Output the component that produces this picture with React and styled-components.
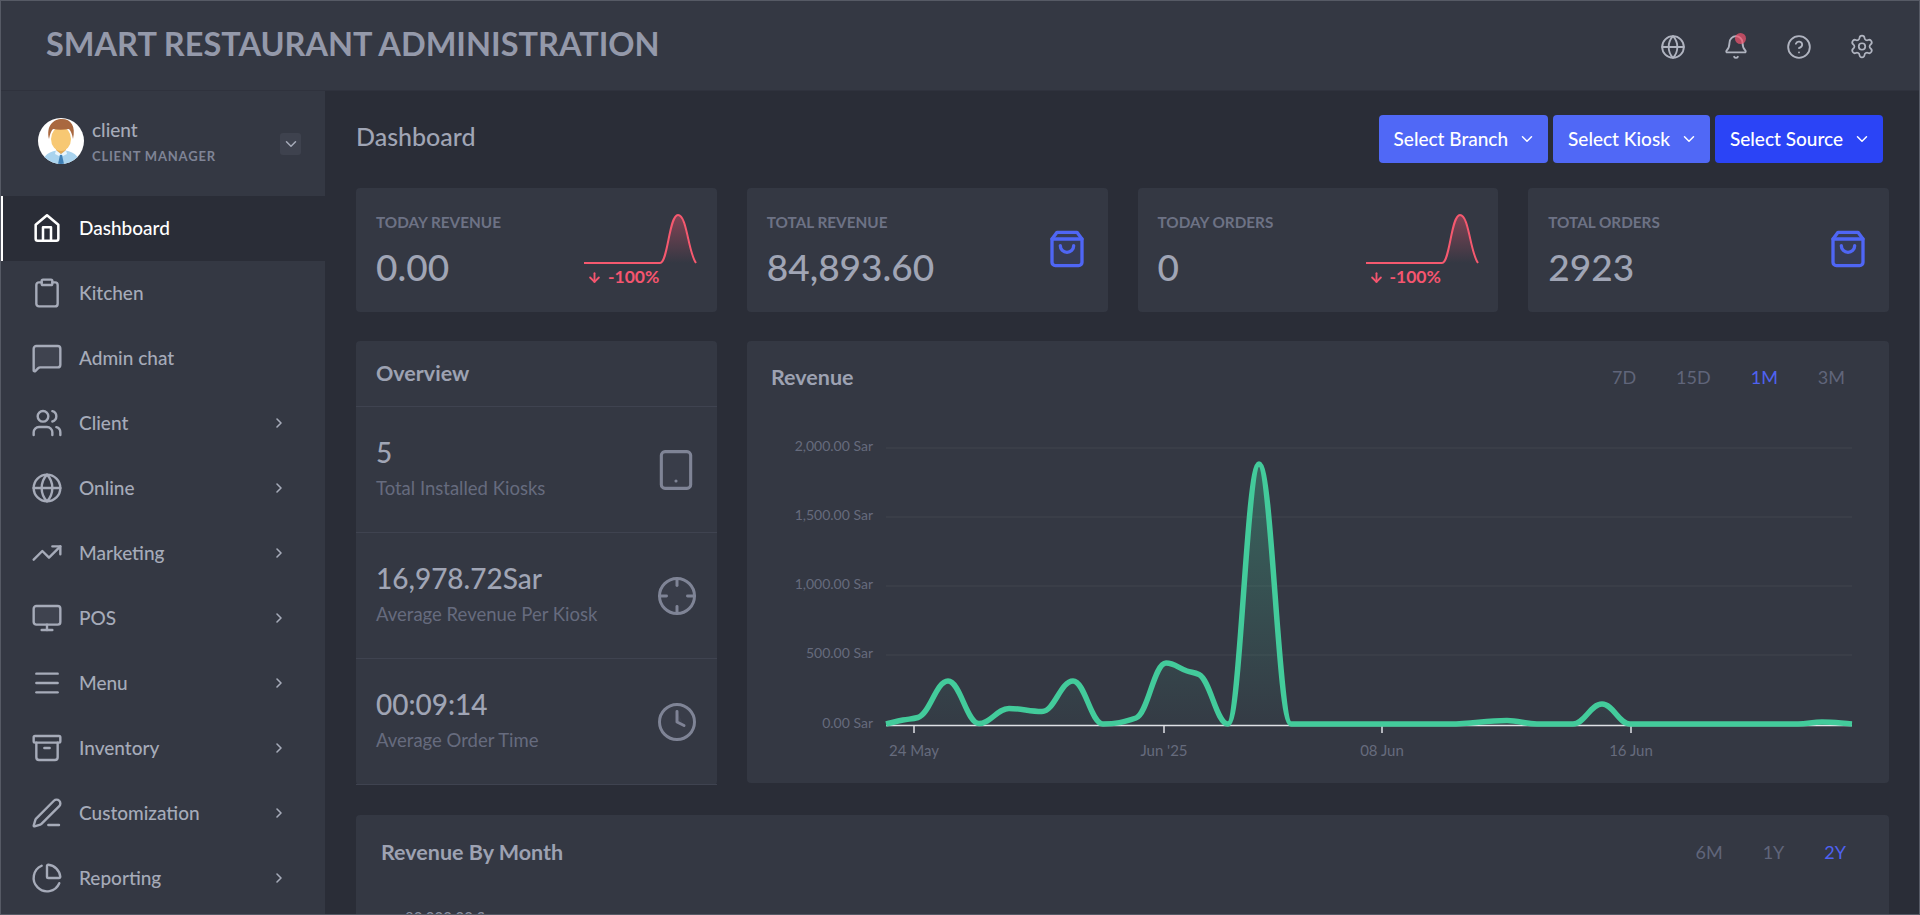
import React from 'react';
import styled, { createGlobalStyle } from 'styled-components';
import {
  Archive,
  ChevronDown,
  ChevronRight,
  Clipboard,
  Globe,
  Bell,
  CircleHelp,
  Clock,
  Crosshair,
  Menu,
  MessageSquare,
  Monitor,
  PenLine,
  ChartPie,
  Settings,
  Tablet,
  TrendingUp,
  Users,
  ArrowDown,
} from 'lucide-react';

const FONT = 'Lato, "Noto Sans", "Liberation Sans", sans-serif';

const GlobalStyle = createGlobalStyle`
  html, body {
    margin: 0;
    height: 100%;
    overflow: hidden;
    background: #2a2d37;
  }
  body {
    font-family: ${FONT};
  }
  * {
    box-sizing: border-box;
  }
`;

const Shell = styled.div`
  height: 915px;
  display: flex;
  flex-direction: column;
  overflow: hidden;
  border: 1px solid #565a65;
  background: #2a2d37;
`;

const TopBar = styled.header`
  flex: 0 0 90px;
  display: flex;
  align-items: center;
  justify-content: space-between;
  padding: 0 44px 0 45px;
  background: #343843;
  border-bottom: 1px solid #2f323d;
`;

const Brand = styled.h1`
  margin: 0 0 4px;
  font-size: 32.5px;
  font-weight: 700;
  color: #9499aa;
`;

const TopIcons = styled.div`
  display: flex;
  align-items: center;
  gap: 37px;
  margin-top: 2px;
  color: #b0b4c0;
`;

const TopIcon = styled.span`
  position: relative;
  display: flex;
  width: 26px;
  height: 26px;
  align-items: center;
  justify-content: center;
`;

const BellDot = styled.i`
  position: absolute;
  top: -1px;
  right: 3px;
  width: 11px;
  height: 11px;
  border-radius: 50%;
  background: rgba(245, 85, 111, 0.7);
`;

const Body = styled.div`
  flex: 1;
  display: flex;
  min-height: 0;
`;

const Sidebar = styled.aside`
  flex: 0 0 324px;
  background: #343843;
`;

const UserPanel = styled.div`
  height: 105px;
  display: flex;
  align-items: center;
  padding: 0 24px 6px 37px;
  gap: 8px;
`;

const UserText = styled.div`
  flex: 1;
  display: flex;
  flex-direction: column;
  gap: 7px;
`;

const UserName = styled.span`
  font-size: 19px;
  font-weight: 500;
  color: #a6abb9;
`;

const UserRole = styled.span`
  font-size: 13px;
  font-weight: 700;
  letter-spacing: 0.8px;
  color: #7f8496;
`;

const UserToggle = styled.span`
  display: flex;
  width: 21px;
  height: 22px;
  margin-top: 6px;
  align-items: center;
  justify-content: center;
  border-radius: 3px;
  background: #3e424e;
  color: #a6abb9;
`;

const NavItem = styled.div`
  position: relative;
  height: 65px;
  display: flex;
  align-items: center;
  padding: 0 38px 2px 30px;
  gap: 16px;
  font-size: 19px;
  font-weight: 500;
  color: ${({ $active }) => ($active ? '#ffffff' : '#a6abb9')};
  background: ${({ $active }) => ($active ? '#2a2d37' : 'transparent')};

  &::before {
    content: '';
    display: ${({ $active }) => ($active ? 'block' : 'none')};
    position: absolute;
    left: 0;
    top: 0;
    bottom: 0;
    width: 2px;
    background: #ffffff;
  }
`;

const NavLabel = styled.span`
  flex: 1;
`;

const NavChevron = styled.span`
  display: flex;
  color: #a6abb9;
`;

const Main = styled.main`
  flex: 1;
  min-width: 0;
  padding: 0 30px 0 31px;
`;

const TitleRow = styled.div`
  height: 97px;
  display: flex;
  align-items: center;
  justify-content: space-between;
  padding: 0 6px 2px 0;
`;

const PageTitle = styled.h2`
  margin: 0 0 5px;
  font-size: 25px;
  font-weight: 500;
  color: #a0a5b5;
`;

const Filters = styled.div`
  display: flex;
  gap: 5px;
`;

const FilterButton = styled.button`
  height: 48px;
  display: flex;
  align-items: center;
  gap: 10px;
  padding: 0 12px 0 15px;
  border: 0;
  border-radius: 4px;
  font-family: ${FONT};
  font-size: 19px;
  font-weight: 500;
  color: #ffffff;
  background: ${({ $strong }) => ($strong ? '#2b44f6' : '#5068f6')};
`;

const StatRow = styled.div`
  display: grid;
  grid-template-columns: repeat(4, 1fr);
  gap: 30px;
  margin-bottom: 29px;
`;

const Card = styled.section`
  border-radius: 4px;
  background: #343843;
`;

const StatCard = styled(Card)`
  position: relative;
  height: 124px;
  padding: 24px 20px 0;
`;

const StatLabel = styled.div`
  font-size: 15.3px;
  font-weight: 700;
  line-height: 20px;
  color: #6d7285;
`;

const StatValue = styled.div`
  margin-top: 12px;
  font-size: 37px;
  font-weight: 500;
  line-height: 46px;
  color: #a0a5b5;
`;

const BagIcon = styled.svg`
  position: absolute;
  right: 21px;
  top: 41px;
  width: 40px;
  height: 40px;
  color: #4f66f5;
`;

const Spark = styled.svg`
  position: absolute;
  left: 228px;
  top: 24px;
  width: 114px;
  height: 55px;
`;

const Trend = styled.div`
  position: absolute;
  left: 231px;
  top: 79px;
  display: flex;
  align-items: center;
  gap: 6px;
  font-size: 17.5px;
  font-weight: 700;
  line-height: 20px;
  color: #f5556f;
`;

const PanelRow = styled.div`
  display: grid;
  grid-template-columns: 361px 1fr;
  gap: 30px;
  align-items: start;
  margin-bottom: 30px;
`;

const OverviewHead = styled.div`
  height: 66px;
  display: flex;
  align-items: center;
  padding: 0 20px 2px;
  border-bottom: 1px solid #3f4350;
`;

const PanelTitle = styled.h3`
  margin: 0;
  font-size: 21.5px;
  font-weight: 700;
  color: #9da2b2;
`;

const OverviewRow = styled.div`
  height: 126px;
  display: flex;
  align-items: center;
  justify-content: space-between;
  padding: 0 19px 0 20px;
  border-bottom: 1px solid #3f4350;
  color: #7f8496;
`;

const OverviewText = styled.div`
  margin-bottom: 3px;
`;

const OverviewValue = styled.div`
  margin-bottom: 4px;
  font-size: 28px;
  font-weight: 500;
  line-height: 36px;
  color: #a0a5b5;
`;

const OverviewCaption = styled.div`
  font-size: 18.5px;
  line-height: 28px;
  color: #666b7e;
`;

const RevenueCard = styled(Card)`
  height: 442px;
`;

const ChartHead = styled.div`
  display: flex;
  align-items: center;
  justify-content: space-between;
  height: ${({ $tall }) => ($tall ? '76px' : '75px')};
  padding: ${({ $tall }) => ($tall ? '0 43px 2px 25px' : '0 44px 3px 24px')};
`;

const RangeTabs = styled.div`
  display: flex;
  gap: 40px;
`;

const RangeTab = styled.span`
  font-size: 18px;
  color: ${({ $active }) => ($active ? '#4f62f2' : '#60657a')};
`;

const ChartSvg = styled.svg`
  display: block;
  width: 1141px;
  height: 367px;
  font-family: ${FONT};
`;

const MonthCard = styled(Card)`
  height: 300px;
`;

const MonthAxis = styled.div`
  margin: 17px 0 0 49px;
  font-size: 15px;
  color: #8a8fa0;
`;

// hand-read values off the picture, in page coordinates
const REVENUE_POINTS = [
  [886, 724], [903, 720], [918, 717.5], [948, 681], [979, 723.5], [1009, 708.5],
  [1042, 711.5], [1073, 681], [1103, 724], [1136, 718], [1166, 663], [1187, 671],
  [1199, 674.5], [1228, 724], [1259, 464], [1291, 724], [1450, 724], [1507, 720.5],
  [1537, 724], [1573, 724], [1602, 704], [1630, 724], [1798, 724], [1822, 722], [1852, 724],
];

const smoothPath = (points) => {
  const secants = points.slice(1).map(([x, y], i) => (y - points[i][1]) / (x - points[i][0]));
  const slopes = points.map((_, i) => {
    const before = secants[i - 1];
    const after = secants[i];
    if (before === undefined) return after;
    if (after === undefined) return before;
    if (before * after <= 0) return 0;
    return (2 * before * after) / (before + after);
  });
  let d = `M${points[0][0]} ${points[0][1]}`;
  for (let i = 1; i < points.length; i += 1) {
    const [x0, y0] = points[i - 1];
    const [x1, y1] = points[i];
    const dx = (x1 - x0) * 0.4;
    d += ` C${x0 + dx} ${y0 + slopes[i - 1] * dx} ${x1 - dx} ${y1 - slopes[i] * dx} ${x1} ${y1}`;
  }
  return d;
};

const REVENUE_LINE = smoothPath(REVENUE_POINTS);
const REVENUE_AREA = `${REVENUE_LINE} L1852 725 L886 725 Z`;

const Y_TICKS = [
  ['2,000.00 Sar', 448],
  ['1,500.00 Sar', 517],
  ['1,000.00 Sar', 586],
  ['500.00 Sar', 655],
  ['0.00 Sar', 725],
];

const X_TICKS = [
  ['24 May', 914],
  ["Jun '25", 1164],
  ['08 Jun', 1382],
  ['16 Jun', 1631],
];

const NAV = [
  { label: 'Kitchen', Icon: Clipboard },
  { label: 'Admin chat', Icon: MessageSquare, tint: true },
  { label: 'Client', Icon: Users, more: true },
  { label: 'Online', Icon: Globe, more: true },
  { label: 'Marketing', Icon: TrendingUp, more: true },
  { label: 'POS', Icon: Monitor, more: true, tint: true },
  { label: 'Menu', Icon: Menu, more: true },
  { label: 'Inventory', Icon: Archive, more: true },
  { label: 'Customization', Icon: PenLine, more: true },
  { label: 'Reporting', Icon: ChartPie, more: true },
];

const STATS = [
  { label: 'TODAY REVENUE', value: '0.00', spark: true },
  { label: 'TOTAL REVENUE', value: '84,893.60' },
  { label: 'TODAY ORDERS', value: '0', spark: true },
  { label: 'TOTAL ORDERS', value: '2923' },
];

const OVERVIEW = [
  { value: '5', caption: 'Total Installed Kiosks', Icon: Tablet, size: 44 },
  { value: '16,978.72Sar', caption: 'Average Revenue Per Kiosk', Icon: Crosshair, size: 42 },
  { value: '00:09:14', caption: 'Average Order Time', Icon: Clock, size: 42 },
];

const Avatar = () => (
  <svg width="46" height="46" viewBox="0 0 46 46" aria-hidden="true">
    <defs>
      <clipPath id="avatar-clip">
        <circle cx="23" cy="23" r="23" />
      </clipPath>
    </defs>
    <g clipPath="url(#avatar-clip)">
      <rect width="46" height="46" fill="#ffffff" />
      <path d="M4 46c1-9 7-13 19-14 12 1 18 5 19 14z" fill="#a9d3ee" />
      <path d="M18 32l5 4 5-4 1 4-4 2-2-2-2 2-4-2z" fill="#e9f5fc" />
      <path d="M22 37h2l2 9h-6z" fill="#3f7fb5" />
      <path d="M18 27h10v5l-5 4-5-4z" fill="#e5a955" />
      <ellipse cx="23" cy="21" rx="10" ry="12" fill="#f7c873" />
      <path d="M11 21C8 8 15 1 24 1c9 0 14 7 11 20-1-5-2-8-4-10-6 1-11 1-16 0-2 2-3 5-4 10z" fill="#a9683f" />
    </g>
  </svg>
);

const HomeIcon = () => (
  <svg width="32" height="32" viewBox="0 0 24 24" fill="none" stroke="currentColor" strokeWidth="1.9" strokeLinecap="round" strokeLinejoin="round" aria-hidden="true">
    <path d="M3.5 9.5L12 2.5l8.5 7V20a1.5 1.5 0 0 1-1.500 1.500H5A1.500 1.500 0 0 1 3.500 20z" />
    <path d="M9 21.500V11.500h6v10" />
  </svg>
);

const Bag = () => (
  <BagIcon viewBox="0 0 24 24" fill="none" stroke="currentColor" strokeWidth="2" strokeLinecap="round" strokeLinejoin="round" aria-hidden="true">
    <path d="M6 2L3 6v14a2 2 0 0 0 2 2h14a2 2 0 0 0 2-2V6l-3-4z" fill="currentColor" fillOpacity="0.1" />
    <path d="M3 6h18" />
    <path d="M16 10a4 4 0 0 1-8 0" />
  </BagIcon>
);

const Sparkline = ({ id }) => (
  <Spark viewBox="0 0 114 55" aria-hidden="true">
    <defs>
      <linearGradient id={id} x1="0" y1="0" x2="0" y2="1">
        <stop offset="0" stopColor="#f5556f" stopOpacity="0.4" />
        <stop offset="1" stopColor="#f5556f" stopOpacity="0" />
      </linearGradient>
    </defs>
    <path d="M76 51C84 51 85 3 94 3C103 3 104 51 112 51Z" fill={`url(#${id})`} />
    <path d="M0 51H76C84 51 85 3 94 3C103 3 104 40 112 51" fill="none" stroke="#f5596f" strokeWidth="2" />
  </Spark>
);

const RevenueChart = () => (
  <ChartSvg viewBox="747 416 1141 367" aria-hidden="true">
    <defs>
      <linearGradient id="revenue-fill" gradientUnits="userSpaceOnUse" x1="0" y1="464" x2="0" y2="725">
        <stop offset="0" stopColor="#43cf9d" stopOpacity="0.3" />
        <stop offset="1" stopColor="#43cf9d" stopOpacity="0.02" />
      </linearGradient>
    </defs>
    {Y_TICKS.map(([label, y]) => (
      <g key={label}>
        {y < 725 && <line x1="886" x2="1852" y1={y} y2={y} stroke="#40444f" />}
        <text x="873" y={y + 2.5} textAnchor="end" fontSize="14" fill="#666b7d">{label}</text>
      </g>
    ))}
    <line x1="886" x2="1852" y1="725.500" y2="725.500" stroke="#dfe1e6" strokeWidth="1.500" />
    {X_TICKS.map(([label, x]) => (
      <g key={label}>
        <line x1={x} x2={x} y1="726" y2="733" stroke="#dfe1e6" strokeWidth="1.500" />
        <text x={x} y="756" textAnchor="middle" fontSize="15" fill="#666b7d">{label}</text>
      </g>
    ))}
    <path d={REVENUE_AREA} fill="url(#revenue-fill)" />
    <path d={REVENUE_LINE} fill="none" stroke="#43cb9b" strokeWidth="5.500" />
  </ChartSvg>
);

const App = () => (
  <Shell>
    <GlobalStyle />
    <TopBar>
      <Brand>SMART RESTAURANT ADMINISTRATION</Brand>
      <TopIcons>
        <TopIcon><Globe size={28} strokeWidth={1.7} /></TopIcon>
        <TopIcon>
          <Bell size={28} strokeWidth={1.7} />
          <BellDot />
        </TopIcon>
        <TopIcon><CircleHelp size={28} strokeWidth={1.7} /></TopIcon>
        <TopIcon><Settings size={29} strokeWidth={1.6} /></TopIcon>
      </TopIcons>
    </TopBar>
    <Body>
      <Sidebar>
        <UserPanel>
          <Avatar />
          <UserText>
            <UserName>client</UserName>
            <UserRole>CLIENT MANAGER</UserRole>
          </UserText>
          <UserToggle><ChevronDown size={18} strokeWidth={2} /></UserToggle>
        </UserPanel>
        <NavItem $active>
          <HomeIcon />
          <NavLabel>Dashboard</NavLabel>
        </NavItem>
        {NAV.map(({ label, Icon, more, tint }) => (
          <NavItem key={label}>
            <Icon
              size={32}
              strokeWidth={1.8}
              fill={tint ? 'currentColor' : 'none'}
              fillOpacity={tint ? 0.1 : 0}
            />
            <NavLabel>{label}</NavLabel>
            {more && <NavChevron><ChevronRight size={16} strokeWidth={2.4} /></NavChevron>}
          </NavItem>
        ))}
      </Sidebar>
      <Main>
        <TitleRow>
          <PageTitle>Dashboard</PageTitle>
          <Filters>
            <FilterButton>Select Branch <ChevronDown size={18} strokeWidth={2} /></FilterButton>
            <FilterButton>Select Kiosk <ChevronDown size={18} strokeWidth={2} /></FilterButton>
            <FilterButton $strong>Select Source <ChevronDown size={18} strokeWidth={2} /></FilterButton>
          </Filters>
        </TitleRow>
        <StatRow>
          {STATS.map(({ label, value, spark }) => (
            <StatCard key={label}>
              <StatLabel>{label}</StatLabel>
              <StatValue>{value}</StatValue>
              {spark ? (
                <>
                  <Sparkline id={`spark-${label.replace(' ', '-')}`} />
                  <Trend><ArrowDown size={15} strokeWidth={3} /> -100%</Trend>
                </>
              ) : (
                <Bag />
              )}
            </StatCard>
          ))}
        </StatRow>
        <PanelRow>
          <Card>
            <OverviewHead>
              <PanelTitle>Overview</PanelTitle>
            </OverviewHead>
            {OVERVIEW.map(({ value, caption, Icon, size }) => (
              <OverviewRow key={caption}>
                <OverviewText>
                  <OverviewValue>{value}</OverviewValue>
                  <OverviewCaption>{caption}</OverviewCaption>
                </OverviewText>
                <Icon size={size} strokeWidth={1.7} fill="currentColor" fillOpacity={0.08} />
              </OverviewRow>
            ))}
          </Card>
          <RevenueCard>
            <ChartHead>
              <PanelTitle>Revenue</PanelTitle>
              <RangeTabs>
                <RangeTab>7D</RangeTab>
                <RangeTab>15D</RangeTab>
                <RangeTab $active>1M</RangeTab>
                <RangeTab>3M</RangeTab>
              </RangeTabs>
            </ChartHead>
            <RevenueChart />
          </RevenueCard>
        </PanelRow>
        <MonthCard>
          <ChartHead $tall>
            <PanelTitle>Revenue By Month</PanelTitle>
            <RangeTabs>
              <RangeTab>6M</RangeTab>
              <RangeTab>1Y</RangeTab>
              <RangeTab $active>2Y</RangeTab>
            </RangeTabs>
          </ChartHead>
          <MonthAxis>80,000.00 Sar</MonthAxis>
        </MonthCard>
      </Main>
    </Body>
  </Shell>
);

export default App;
